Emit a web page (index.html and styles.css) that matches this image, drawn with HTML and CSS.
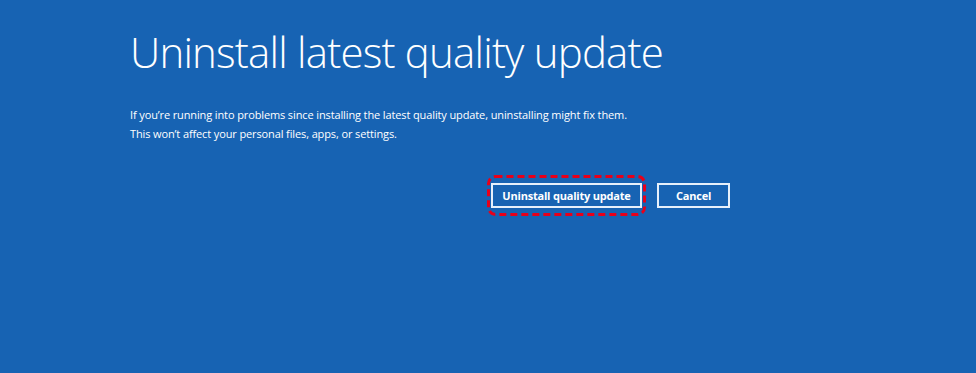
FILE: index.html
```html
<!DOCTYPE html>
<html lang="en">
<head>
  <meta charset="UTF-8" />
  <title>Uninstall latest quality update</title>
  <link rel="stylesheet" href="styles.css">
</head>
<body>

<main class="panel">
  <h1 class="title">Uninstall latest quality update</h1>
  <p class="info">If you’re running into problems since installing the latest quality update, uninstalling might fix them.</p>
  <p class="info">This won’t affect your personal files, apps, or settings.</p>

  <div class="actions">
    <span class="highlight">
      <svg class="dash" width="159" height="41" viewBox="0 0 159 41">
        <rect x="1.5" y="1.5" width="156" height="38" rx="7" fill="none" stroke="#e8001a" stroke-width="3" stroke-dasharray="7 4"/>
      </svg>
      <button class="btn btn-wide">Uninstall quality update</button>
    </span>
    <button class="btn">Cancel</button>
  </div>
</main>

</body>
</html>
```

FILE: styles.css
```css
body {
  margin: 0;
  background-color: #1763b3;
  color: #fff;
  font-family: "Open Sans", "Noto Sans", sans-serif;
  height: 373px;
  overflow: hidden;
}
.panel {
  width: 600px;
  padding: 22px 0 0 130px;
}
.title {
  margin: 0 0 23px;
  font-size: 42px;
  font-weight: 300;
  line-height: 60px;
  letter-spacing: -0.8px;
  white-space: nowrap;
}
.info {
  margin: 0;
  font-size: 11px;
  line-height: 19px;
  letter-spacing: -0.12px;
  white-space: nowrap;
}
.actions {
  display: flex;
  justify-content: flex-end;
  align-items: center;
  gap: 11px;
  margin-top: 32px;
}
.highlight {
  position: relative;
  display: inline-flex;
  padding: 8px 4px;
}
.dash {
  position: absolute;
  left: 0;
  top: 0;
}
.btn {
  height: 25px;
  width: 73px;
  padding: 0;
  background-color: #1763b3;
  color: #fff;
  border: 2px solid #e6f0fb;
  font-family: inherit;
  font-size: 11px;
  font-weight: 700;
  letter-spacing: -0.2px;
}
.btn-wide {
  width: 151px;
}
```
